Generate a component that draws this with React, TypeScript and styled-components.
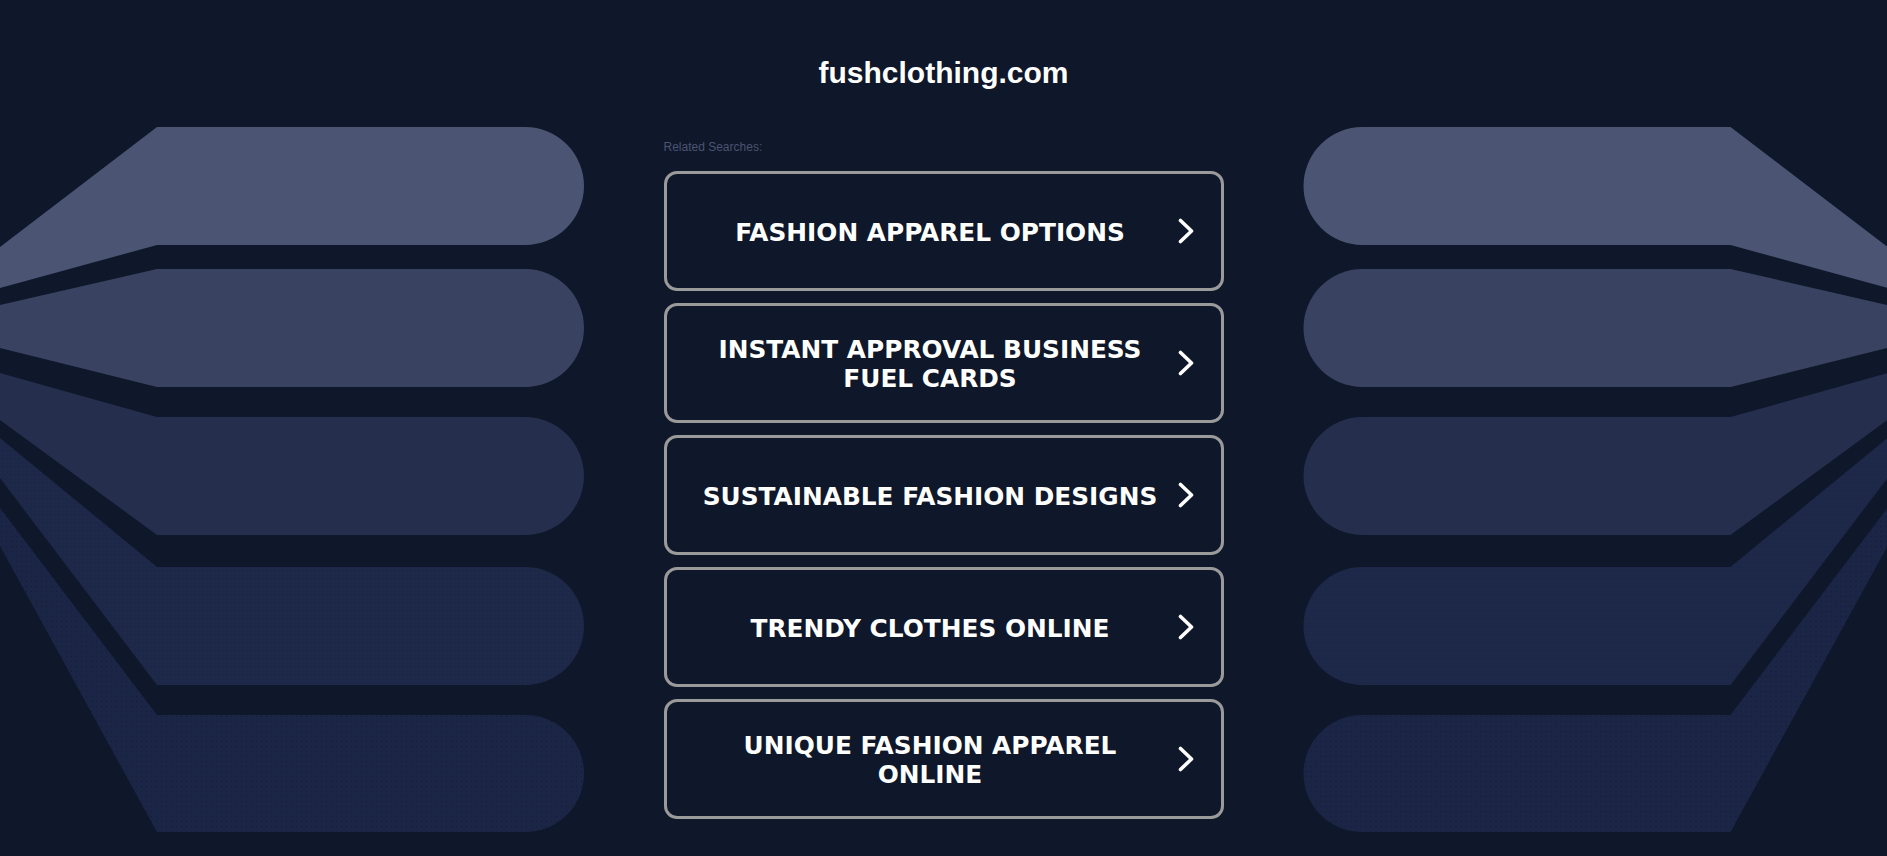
import React from 'react';
import styled, { createGlobalStyle } from 'styled-components';

const searches = [
  'FASHION APPAREL OPTIONS',
  'INSTANT APPROVAL BUSINESS FUEL CARDS',
  'SUSTAINABLE FASHION DESIGNS',
  'TRENDY CLOTHES ONLINE',
  'UNIQUE FASHION APPAREL ONLINE',
];

// flat part of each band: top / bottom y, plus where its tail meets the page edge
const bands = [
  { top: 127, bottom: 245, edgeTop: 247, edgeBottom: 288, fill: '#4b5573' },
  { top: 269, bottom: 387, edgeTop: 305, edgeBottom: 348, fill: '#394361' },
  { top: 417, bottom: 535, edgeTop: 373, edgeBottom: 420, fill: '#252e4c' },
  { top: 567, bottom: 685, edgeTop: 438, edgeBottom: 478, fill: 'dots-a' },
  { top: 715, bottom: 832, edgeTop: 508, edgeBottom: 546, fill: 'dots-b' },
];

const GlobalStyle = createGlobalStyle`
  html, body {
    margin: 0;
    padding: 0;
    background: #0f172a;
  }
  body {
    font-family: 'Liberation Sans', Arial, sans-serif;
    overflow: hidden;
  }
`;

function bandPath(b: (typeof bands)[number]) {
  const r = (b.bottom - b.top) / 2;
  const capX = 584 - r;
  return `M0 ${b.edgeTop} L157 ${b.top} L${capX} ${b.top} A${r} ${r} 0 0 1 ${capX} ${b.bottom} L157 ${b.bottom} L0 ${b.edgeBottom} Z`;
}

function SideArt({ side }: { side: 'left' | 'right' }) {
  const a = `${side}-dots-a`;
  const b = `${side}-dots-b`;
  return (
    <ArtSvg $mirror={side === 'right'} viewBox="0 0 663.5 856" preserveAspectRatio="xMinYMin slice">
      <defs>
        <pattern id={a} width="4" height="4" patternUnits="userSpaceOnUse">
          <rect width="4" height="4" fill="#1d2747" />
          <circle cx="1" cy="1" r="0.6" fill="#243056" />
        </pattern>
        <pattern id={b} width="5" height="5" patternUnits="userSpaceOnUse">
          <rect width="5" height="5" fill="#1b2546" />
          <circle cx="1.5" cy="1.5" r="0.7" fill="#141c36" />
        </pattern>
      </defs>
      {bands.map((band, i) => (
        <path
          key={i}
          d={bandPath(band)}
          fill={band.fill === 'dots-a' ? `url(#${a})` : band.fill === 'dots-b' ? `url(#${b})` : band.fill}
        />
      ))}
    </ArtSvg>
  );
}

function Chevron() {
  return (
    <ChevronSvg viewBox="0 0 16 26" aria-hidden="true">
      <path d="M2.5 2.5 L13.5 13 L2.5 23.5" fill="none" stroke="#fff" strokeWidth="3.6" strokeLinecap="round" strokeLinejoin="round" />
    </ChevronSvg>
  );
}

export default function App() {
  return (
    <>
      <GlobalStyle />
      <Page>
        <SideArt side="left" />
        <Center>
          <Title>fushclothing.com</Title>
          <Related>Related Searches:</Related>
          <SearchList>
            {searches.map((s) => (
              <SearchLink key={s} href="#">
                <Label>{s}</Label>
                <Chevron />
              </SearchLink>
            ))}
          </SearchList>
        </Center>
        <SideArt side="right" />
      </Page>
    </>
  );
}

const Page = styled.div`
  display: grid;
  grid-template-columns: 1fr 560px 1fr;
  height: 100vh;
  background: #0f172a;
`;

const ArtSvg = styled.svg<{ $mirror?: boolean }>`
  display: block;
  width: 100%;
  height: 100%;
  transform: ${(p) => (p.$mirror ? 'scaleX(-1)' : 'none')};
`;

const Center = styled.main`
  display: flex;
  flex-direction: column;
`;

const Title = styled.h1`
  margin: 55px 0 0;
  font-size: 30px;
  line-height: 35px;
  font-weight: bold;
  color: #fff;
  text-align: center;
`;

const Related = styled.p`
  margin: 50px 0 0;
  font-size: 12px;
  line-height: 14px;
  color: #4b5472;
`;

const SearchList = styled.nav`
  display: flex;
  flex-direction: column;
  gap: 12px;
  margin-top: 17px;
`;

const SearchLink = styled.a`
  box-sizing: border-box;
  display: flex;
  align-items: center;
  gap: 17px;
  height: 120px;
  padding: 0 27px 0 33px;
  border: 3px solid #9a9a9a;
  border-radius: 13px;
  text-decoration: none;
  color: #fff;
`;

const Label = styled.span`
  flex: 1;
  padding-top: 2px;
  text-align: center;
  font-family: 'DejaVu Sans', Verdana, sans-serif;
  font-weight: bold;
  font-size: 24.8px;
  line-height: 29px;
`;

const ChevronSvg = styled.svg`
  flex: none;
  width: 16px;
  height: 26px;
`;
